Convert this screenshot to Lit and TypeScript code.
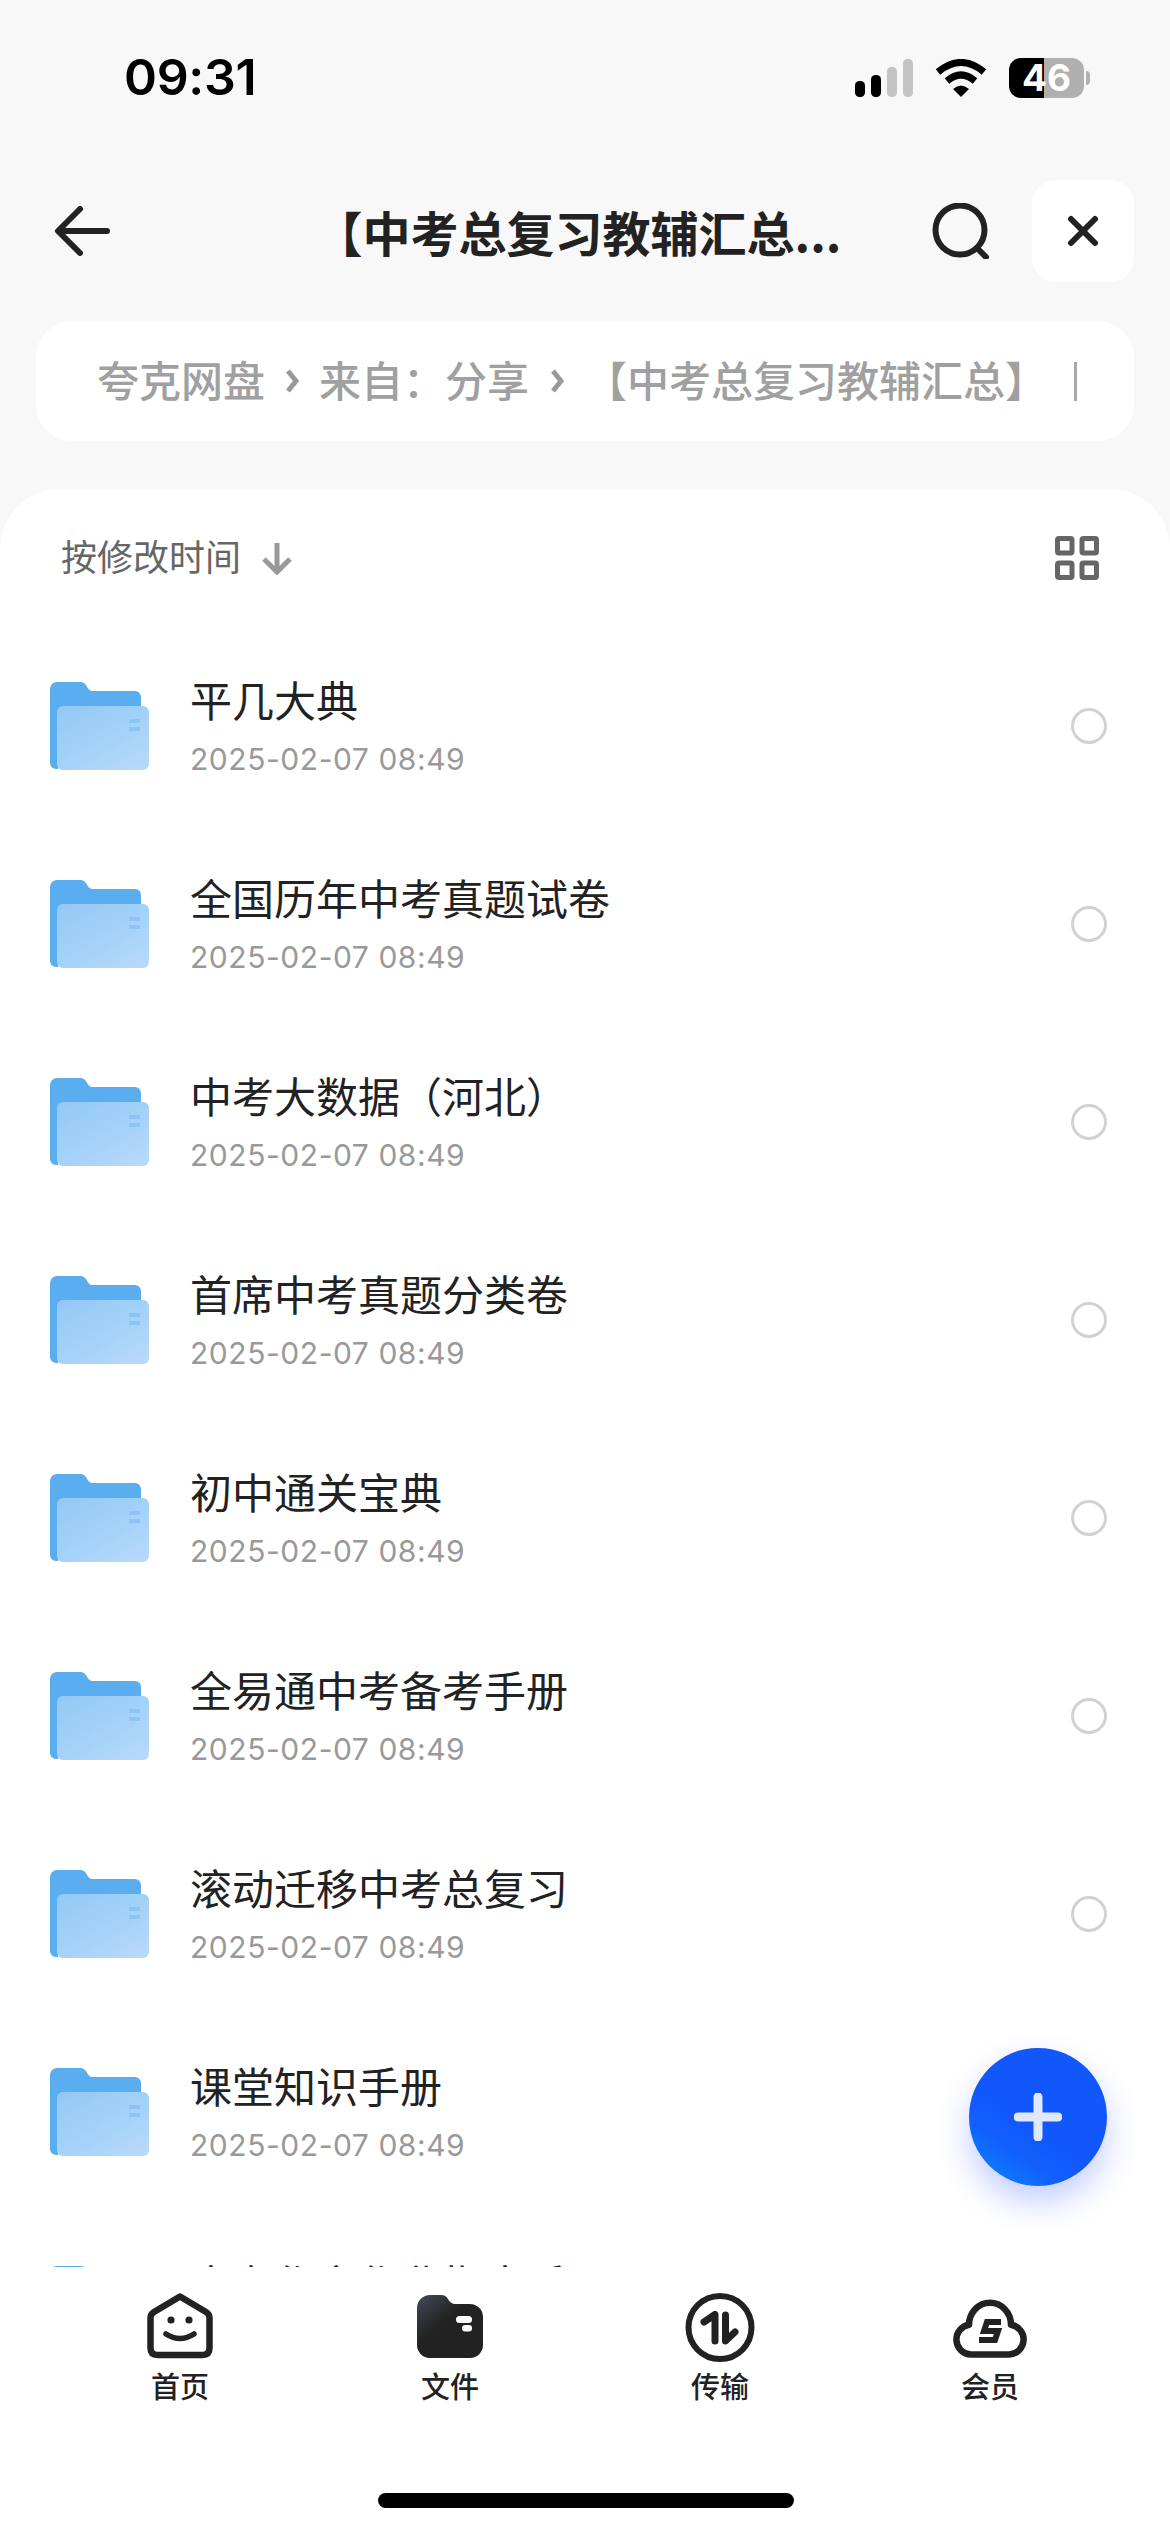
import { LitElement, html, css } from "lit";
import { customElement } from "lit/decorators.js";

const NAMES = ["平几大典","全国历年中考真题试卷","中考大数据（河北）","首席中考真题分类卷","初中通关宝典","全易通中考备考手册","滚动迁移中考总复习","课堂知识手册","中考作文作业指南手册"];

@customElement("app-root")
export class AppRoot extends LitElement {
  static styles = css`
    :host { display:block; position:relative; width:1170px; height:2532px; overflow:hidden; background:#f8f8f8; font-family:"Noto Sans CJK SC","Inter",sans-serif; color:#222; }
    .page { height:2532px; display:flex; flex-direction:column; }
    .status { height:120px; flex:none; display:flex; align-items:center; padding:36px 86px 0 124px; box-sizing:border-box; }
    .time { font:600 50px/1 "Inter",sans-serif; color:#000; letter-spacing:-.3px; flex:1; margin-top:-2px; }
    .sig { display:block; margin-right:22px; }
    .wifi { display:block; margin-right:22px; }
    .batt { width:75px; height:40px; border-radius:12px; background:linear-gradient(90deg,#000 0 35px,#b0b0b0 35px); color:#fff; font:700 37px/40px "Inter",sans-serif; text-align:center; position:relative; }
    .batt::after { content:""; position:absolute; left:77px; top:13px; width:4px; height:14px; border-radius:0 6px 6px 0; background:#b0b0b0; }
    .head { height:102px; margin-top:60px; flex:none; display:flex; align-items:center; padding:0 36px 0 54px; }
    .back { display:block; flex:none; }
    .title { flex:1; text-align:center; font-size:48px; font-weight:700; line-height:60px; color:#222; white-space:nowrap; padding-left:114px; }
    .search { display:block; flex:none; margin-right:42px; }
    .close { width:102px; height:102px; border-radius:24px; background:#fff; display:flex; align-items:center; justify-content:center; flex:none; }
    .crumb { margin:39px 36px 0; height:120px; flex:none; box-sizing:border-box; padding:0 0 5px 61px; border-radius:36px; background:#fff; display:flex; align-items:center; font-size:42px; font-weight:500; color:#a0a0a0; white-space:nowrap; }
    .crumb svg { flex:none; margin:5px 20px 0; display:block; }
    .crumb svg.wide { margin-left:21px; margin-right:21px; }
    .caret { width:3px; height:39px; background:#a8a8a8; margin:5px 0 0 27px; flex:none; }
    .sheet { margin-top:48px; flex:1; min-height:0; background:#fff; border-radius:60px 60px 0 0; display:flex; flex-direction:column; }
    .sort { height:138px; flex:none; display:flex; align-items:center; padding:0 71px 0 61px; font-size:36px; color:#666; }
    .sort span { flex:none; margin-bottom:6px; }
    .sort .down { margin-left:21px; display:block; }
    .sort .grid { margin-left:auto; display:block; }
    .list { height:1640px; flex:none; overflow:hidden; }
    .row { height:198px; display:flex; align-items:center; padding:0 63px 0 50px; box-sizing:border-box; }
    .folder { display:block; flex:none; margin-right:40px; }
    .txt { flex:1; min-width:0; display:flex; flex-direction:column; padding-bottom:5px; }
    .name { font-size:42px; line-height:60px; color:#222; white-space:nowrap; }
    .date { font:400 30px/40px "Inter",sans-serif; color:#999; letter-spacing:.55px; margin-top:10px; }
    .radio { width:36px; height:36px; box-sizing:border-box; border:3px solid #d2d2d6; border-radius:50%; flex:none; }
    .tabs { flex:1; min-height:0; background:#fff; display:grid; grid-template-columns:repeat(4,270px); padding:26px 45px 0; align-content:start; }
    .tab { display:flex; flex-direction:column; align-items:center; font-size:29px; font-weight:500; line-height:40px; color:#222; }
    .tab svg { display:block; height:70px; width:74px; margin-bottom:2px; }
    .home { position:absolute; left:378px; top:2493px; width:416px; height:15px; border-radius:8px; background:#000; }
    .fab { position:absolute; left:969px; top:2048px; width:138px; height:138px; border-radius:50%; background:linear-gradient(215deg,#1257fb 55%,#1260fc 72%,#0a8cff 100%); box-shadow:0 16px 32px rgba(40,80,255,.28); display:flex; align-items:center; justify-content:center; }
    .fab svg { display:block; }
  `;

  folder() {
    return html`<svg class="folder" width="100" height="90" viewBox="0 0 100 90">
      <defs><linearGradient id="fg" x1="0" y1="0" x2=".8" y2="1"><stop offset="0" stop-color="#94c8f3"/><stop offset=".45" stop-color="#9fd0f8"/><stop offset="1" stop-color="#b5d8fb"/></linearGradient></defs>
      <path d="M0 8a7 7 0 0 1 7-7h24c6 0 6 9 11 9h43a6 6 0 0 1 6 6v30H8v42H6a6 6 0 0 1-6-6z" fill="#5aaeef"/>
      <rect x="7" y="25" width="92" height="64" rx="6" fill="url(#fg)"/>
      <rect x="79" y="38" width="11" height="4" fill="#8ec3f5"/><rect x="79" y="46" width="11" height="4" fill="#8ec3f5"/>
    </svg>`;
  }

  render() {
    return html`<div class="page">
      <div class="status">
        <div class="time">09:31</div>
        <svg class="sig" width="58" height="38" viewBox="0 0 58 38"><rect x="0" y="22" width="10" height="16" rx="4.5" fill="#000"/><rect x="16" y="16" width="10" height="22" rx="4.5" fill="#000"/><rect x="32" y="8" width="10" height="30" rx="4.5" fill="#c4c4c4"/><rect x="48" y="0" width="10" height="38" rx="4.5" fill="#c4c4c4"/></svg>
        <svg class="wifi" width="52" height="38" viewBox="0 0 52 38"><path d="M3 13Q26-6 49 13M12 22Q26 10 40 22" fill="none" stroke="#000" stroke-width="7"/><path d="M18 30Q26 23 34 30L26 38z" fill="#000"/></svg>
        <div class="batt">46</div>
      </div>
      <div class="head">
        <svg class="back" width="56" height="50" viewBox="0 0 56 50"><path d="M26 3 4 25l22 22M5 25h48" fill="none" stroke="#222" stroke-width="6" stroke-linecap="round" stroke-linejoin="round"/></svg>
        <div class="title">【中考总复习教辅汇总...</div>
        <svg class="search" width="58" height="56" viewBox="0 0 58 56"><circle cx="28" cy="27" r="24.5" fill="none" stroke="#222" stroke-width="6"/><path d="M45 45l9 9" stroke="#222" stroke-width="6" stroke-linecap="round"/></svg>
        <div class="close"><svg width="32" height="32" viewBox="0 0 32 32"><path d="M4 4l24 24M28 4 4 28" stroke="#222" stroke-width="6" stroke-linecap="round"/></svg></div>
      </div>
      <div class="crumb">夸克网盘<svg width="14" height="26" viewBox="0 0 14 26"><path d="M3 3l8 10-8 10" fill="none" stroke="#999" stroke-width="5"/></svg>来自：分享<svg class="wide" width="14" height="26" viewBox="0 0 14 26"><path d="M3 3l8 10-8 10" fill="none" stroke="#999" stroke-width="5"/></svg>【中考总复习教辅汇总】<div class="caret"></div></div>
      <div class="sheet">
        <div class="sort"><span>按修改时间</span>
          <svg class="down" width="30" height="34" viewBox="0 0 30 34"><path d="M15 2v28M2 18l13 13 13-13" fill="none" stroke="#999" stroke-width="5"/></svg>
          <svg class="grid" width="44" height="44" viewBox="0 0 44 44"><g fill="none" stroke="#666" stroke-width="5"><rect x="2.5" y="2.5" width="14.5" height="14.5" rx="1.5"/><rect x="27" y="2.5" width="14.5" height="14.5" rx="1.5"/><rect x="2.5" y="27" width="14.5" height="14.5" rx="1.5"/><rect x="27" y="27" width="14.5" height="14.5" rx="1.5"/></g></svg>
        </div>
        <div class="list">${NAMES.map((n, i) => html`<div class="row">${this.folder()}<div class="txt"><div class="name">${n}</div><div class="date">2025-02-07 08:49</div></div>${i < 7 ? html`<div class="radio"></div>` : ""}</div>`)}</div>
        <div class="tabs">
          <div class="tab"><svg viewBox="0 0 74 70"><path d="M37 3.5 11 19q-3.500 2-3.500 6v30q0 7 7 7h45q7 0 7-7V25q0-4-3.500-6z" fill="none" stroke="#222" stroke-width="6.500" stroke-linejoin="round"/><circle cx="28" cy="27" r="3.600" fill="#222"/><circle cx="46" cy="27" r="3.600" fill="#222"/><path d="M23 41q14 9 28 0" fill="none" stroke="#222" stroke-width="5.500" stroke-linecap="round"/></svg>首页</div>
          <div class="tab"><svg viewBox="0 0 74 70"><defs><linearGradient id="tf" x1="0" y1="0" x2=".7" y2=".8"><stop offset=".1" stop-color="#3c4450"/><stop offset=".55" stop-color="#222"/></linearGradient></defs><path d="M4 15A13 13 0 0 1 17 2h11q5 0 7 4t6 5h16a13 13 0 0 1 13 13v28a13 13 0 0 1-13 13H17A13 13 0 0 1 4 52z" fill="url(#tf)"/><rect x="43" y="23" width="16" height="7" rx="3.500" fill="#fff"/><rect x="49" y="32" width="10" height="6.500" rx="3.200" fill="#fff"/></svg>文件</div>
          <div class="tab"><svg viewBox="0 0 74 70"><circle cx="37" cy="34.500" r="31.500" fill="none" stroke="#222" stroke-width="6"/><path d="M21 29 32 21.500V48" fill="none" stroke="#222" stroke-width="7" stroke-linecap="round" stroke-linejoin="round"/><path d="M32 21.500 24 28h8z" fill="#222"/><path d="M42.500 22V48L52 39" fill="none" stroke="#222" stroke-width="7" stroke-linecap="round" stroke-linejoin="round"/><path d="M42.500 48 50 41h-7.500z" fill="#222"/></svg>传输</div>
          <div class="tab"><svg viewBox="0 0 74 70"><path d="M18 61.500H56A15 15 0 0 0 58 31.700A21 22 0 0 0 16 31.700A15 15 0 0 0 18 61.500Z" fill="none" stroke="#222" stroke-width="6.500" stroke-linejoin="round"/><path d="M48 29H34L31 38H45L42 47H26" fill="none" stroke="#222" stroke-width="6"/></svg>会员</div>
        </div>
      </div>
    </div>
    <div class="home"></div>
    <div class="fab"><svg width="48" height="48" viewBox="0 0 48 48"><path d="M24 4v40M4 24h40" stroke="#e0e8fd" stroke-width="9" stroke-linecap="round"/></svg></div>`;
  }
}
